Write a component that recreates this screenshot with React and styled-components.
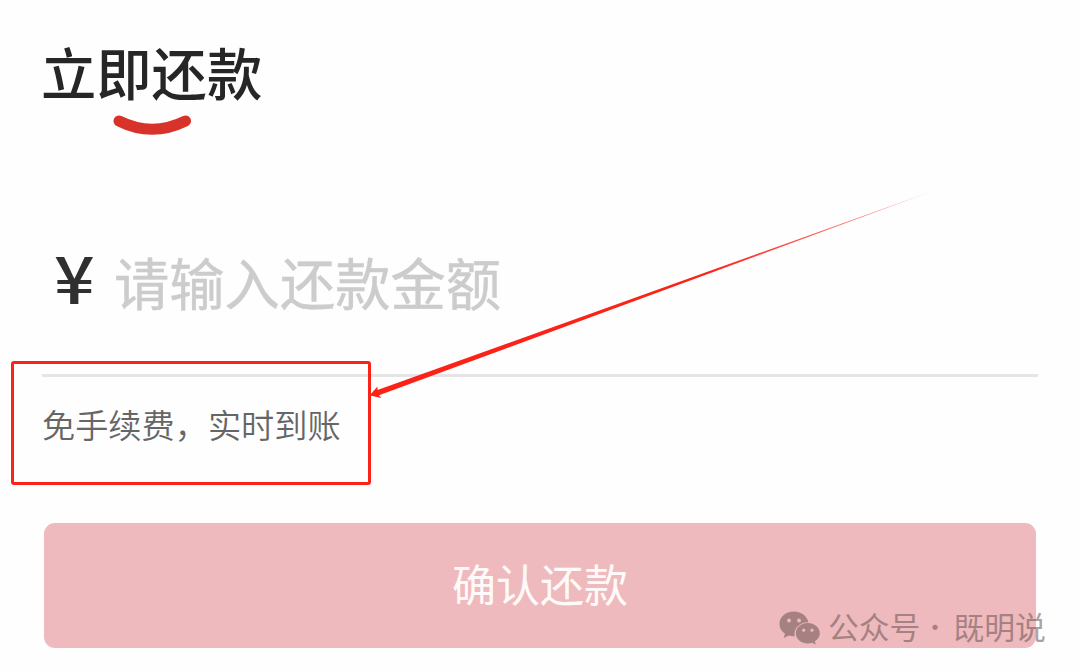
import React from 'react';
import styled, { createGlobalStyle } from 'styled-components'

const App = () => {
  return (
    <>
      <GlobalStyle />
      <Page>
        <Header>
          <Title>立即还款</Title>
          <Smile viewBox="0 0 80 24">
            <path d="M7 8 Q40 24.5 73.500 8" />
          </Smile>
        </Header>
        <AmountRow>
          <Currency>¥</Currency>
          <Placeholder>请输入还款金额</Placeholder>
        </AmountRow>
        <Hint>免手续费，实时到账</Hint>
        <Submit>确认还款</Submit>
        <Highlight />
        <Arrow viewBox="0 0 570 220">
          <defs>
            <linearGradient id="tail" x1="0" x2="1" y1="0" y2="0">
              <stop offset="0.6" stopColor="#fb2318" />
              <stop offset="1" stopColor="#fb2318" stopOpacity="0.45" />
            </linearGradient>
          </defs>
          <path fill="url(#tail)" d="M-0.500 205.500 L7.500 196.500 L7.500 200 L560 2 L9 205.300 L11.500 208 Z" />
        </Arrow>
        <Watermark>
          <Wechat viewBox="0 0 42 34">
            <path d="M15 0.500C6.500 .5.5 6 .5 13c0 4 2 7.400 5.500 9.700L4.700 27l5-2.500c2 .6 4 .9 6 .7C14 17.500 21 11 29.500 11.300 28 5 22 .5 15 .5Z" />
            <path d="M28.800 12c-6.600 0-12 4.600-12 10.200s5.400 10.200 12 10.200c1.500 0 2.900-.2 4.200-.6l3.800 1.700-1-3.300c3-1.800 5-4.700 5-8C40.800 16.600 35.400 12 28.800 12Z" />
            <g fill="#efbabd">
              <circle cx="10" cy="9.500" r="1.900" />
              <circle cx="20" cy="9.500" r="1.900" />
              <circle cx="24.700" cy="19.200" r="1.600" />
              <circle cx="33" cy="19.200" r="1.600" />
            </g>
          </Wechat>
          <Account>公众号</Account>
          <Dot>·</Dot>
          <Account>既明说</Account>
        </Watermark>
      </Page>
    </>
  );
};

const GlobalStyle = createGlobalStyle`
  body {
    margin: 0;
    background: #fefefe;
    font-family: "Noto Sans CJK SC", sans-serif;
  }
`;

const Page = styled.div`
  position: relative;
  box-sizing: border-box;
  width: 1080px;
  height: 671px;
  padding: 41px 42px 0;
  overflow: hidden;
`;

const Header = styled.div`
  display: flex;
  flex-direction: column;
  height: 171px;
`;

const Title = styled.div`
  margin-left: -1px;
  font-size: 55.3px;
  line-height: 60px;
  font-weight: 500;
  color: #262626;
`;

const Smile = styled.svg`
  width: 80px;
  height: 24px;
  margin: 12px 0 0 70px;
  fill: none;
  stroke: #d8332b;
  stroke-width: 11;
  stroke-linecap: round;
`;

const AmountRow = styled.div`
  display: flex;
  box-sizing: border-box;
  width: 996px;
  height: 165px;
  padding-top: 39px;
  border-bottom: 3px solid #e5e5e5;
`;

const Currency = styled.div`
  width: 72px;
  padding-left: 12px;
  box-sizing: border-box;
  font-size: 66px;
  line-height: 49px;
  font-weight: 500;
  color: #303030;
  transform: scaleX(1.08);
  transform-origin: 12px 50%;
`;

const Placeholder = styled.div`
  font-size: 55.3px;
  line-height: 60px;
  color: #cccccc;
  -webkit-text-stroke: 0.5px #cccccc;
`;

const Hint = styled.div`
  height: 146px;
  padding-top: 25px;
  box-sizing: border-box;
  font-size: 33.2px;
  line-height: 44px;
  font-weight: 350;
  color: #666666;
`;

const Submit = styled.div`
  display: flex;
  justify-content: center;
  align-items: center;
  box-sizing: border-box;
  width: 992px;
  height: 125px;
  padding-bottom: 6px;
  margin-left: 2px;
  border-radius: 11px;
  background: #efbabd;
  font-size: 44px;
  color: #fffafa;
`;

const Highlight = styled.div`
  position: absolute;
  left: 11px;
  top: 361px;
  box-sizing: border-box;
  width: 360px;
  height: 124px;
  border: 3px solid #fb2318;
  border-radius: 3px;
`;

const Arrow = styled.svg`
  position: absolute;
  left: 370px;
  top: 190px;
  width: 570px;
  height: 220px;
`;

const Watermark = styled.div`
  position: absolute;
  left: 779px;
  top: 606px;
  display: flex;
  height: 44px;
  line-height: 40px;
  color: #634e4d;
  opacity: 0.52;
`;

const Wechat = styled.svg`
  width: 42px;
  height: 34px;
  margin: 5px 7px 0 0;
  fill: currentColor;
`;

const Account = styled.div`
  font-size: 30.8px;
`;

const Dot = styled.div`
  width: 33px;
  padding-right: 4px;
  box-sizing: border-box;
  font-size: 25px;
  text-align: center;
`;

export default App;
